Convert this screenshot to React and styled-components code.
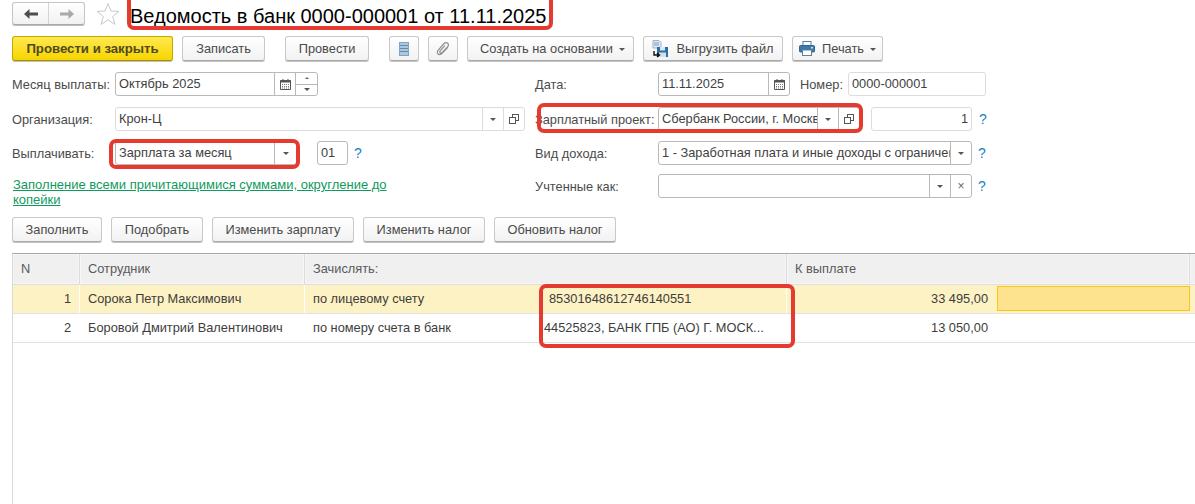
import React from 'react';
import styled, { createGlobalStyle } from 'styled-components';

const GlobalStyle = createGlobalStyle`
  html, body {
    margin: 0;
    padding: 0;
    background: #fff;
  }
  body {
    font-family: "Liberation Sans", Arial, sans-serif;
    font-size: 12.8px;
    color: #4b4b4b;
  }
`;

const Page = styled.div`
  position: relative;
  width: 1195px;
  height: 504px;
  overflow: hidden;
  background: #fff;
`;

const Header = styled.div`
  display: flex;
  align-items: center;
  height: 23px;
  padding: 2px 0 0 12px;
`;

const NavGroup = styled.div`
  display: flex;
  width: 73px;
  height: 23px;
  box-sizing: border-box;
  border: 1px solid #c4c4c4;
  border-bottom-color: #a9a9a9;
  border-radius: 3px;
  background: linear-gradient(#fff, #f1f1f1);
  box-shadow: 0 1px 0 #bbb;
`;

const NavCell = styled.div`
  flex: 1;
  display: flex;
  align-items: center;
  justify-content: center;
  & + & {
    border-left: 1px solid #d4d4d4;
  }
`;

const StarBox = styled.div`
  display: flex;
  margin-left: 11px;
  width: 24px;
  height: 24px;
`;

const Title = styled.h1`
  margin: 4px 0 0 10px;
  font-size: 20px;
  font-weight: 400;
  line-height: 24px;
  color: #000;
  white-space: nowrap;
`;

const Toolbar = styled.div`
  display: flex;
  height: 26px;
  margin-top: 11px;
  padding-left: 12px;
`;

const Button = styled.div`
  display: flex;
  align-items: center;
  justify-content: center;
  flex: none;
  width: ${p => p.$w}px;
  margin-left: ${p => p.$gap || 0}px;
  height: 25px;
  box-sizing: border-box;
  padding-left: ${p => p.$shift || 0}px;
  border: 1px solid #c9c9c9;
  border-bottom-color: #ababab;
  border-radius: 3px;
  background: linear-gradient(#ffffff, #f2f2f2);
  box-shadow: 0 1px 0 #c2c2c2;
  color: #4a4a4a;
  white-space: nowrap;
`;

const PrimaryButton = styled(Button)`
  border-color: #c2a800;
  border-bottom-color: #a89000;
  background: linear-gradient(#ffe94f, #f7d400);
  font-size: 13.2px;
  font-weight: 700;
  color: #4e4a20;
`;

const Caret = styled.span`
  display: inline-block;
  margin-left: 6px;
  margin-top: 1px;
  border: 3px solid transparent;
  border-top: 3px solid #555;
  border-bottom: 0;
`;

const IconSlot = styled.span`
  display: inline-flex;
  margin-right: 7px;
`;

const Form = styled.div`
  display: grid;
  grid-template-columns: 523px 660px;
  margin-top: 10px;
  padding-left: 12px;
`;

const FormColumn = styled.div`
  display: flex;
  flex-direction: column;
`;

const FormRow = styled.div`
  display: flex;
  align-items: center;
  height: 24px;
  margin-bottom: ${p => p.$after ?? 10}px;
`;

const Label = styled.div`
  flex: none;
  width: ${p => p.$w}px;
  margin-left: ${p => p.$gap || 0}px;
  white-space: nowrap;
`;

const Field = styled.div`
  display: flex;
  flex: none;
  align-items: stretch;
  width: ${p => p.$w}px;
  margin-left: ${p => p.$gap || 0}px;
  height: 24px;
  box-sizing: border-box;
  background: #fff;
  border: 1px solid ${p => (p.$soft ? '#dcdcdc' : '#b9b9b9')};
  border-radius: 3px;
`;

const FieldText = styled.div`
  flex: 1;
  min-width: 0;
  overflow: hidden;
  padding: 0 ${p => p.$padRight || 3}px 0 3px;
  line-height: 22px;
  white-space: nowrap;
  text-align: ${p => p.$align || 'left'};
  color: #3f3f3f;
`;

const FieldCell = styled.div`
  display: flex;
  flex: none;
  align-items: center;
  justify-content: center;
  width: ${p => p.$w}px;
  border-left: 1px solid ${p => (p.$soft ? '#dcdcdc' : '#b9b9b9')};
`;

const DownTriangle = styled.span`
  display: block;
  border: 3px solid transparent;
  border-top: 3px solid #555;
  border-bottom: 0;
`;

const UpTriangle = styled.span`
  display: block;
  border: 2px solid transparent;
  border-bottom: 2px solid #666;
  border-top: 0;
`;

const SpinCell = styled(FieldCell)`
  flex-direction: column;
  align-items: stretch;
`;

const SpinPart = styled.div`
  flex: 1;
  display: flex;
  align-items: center;
  justify-content: center;
  & + & {
    border-top: 1px solid #b9b9b9;
  }
`;

const ClearMark = styled.span`
  font-size: 12px;
  line-height: 1;
  color: #666;
`;

const Hint = styled.span`
  flex: none;
  margin-left: ${p => p.$gap || 6}px;
  font-size: 14px;
  color: #1f7fc0;
`;

const FillLink = styled.a`
  display: block;
  width: 385px;
  margin-left: 1px;
  font-size: 13px;
  line-height: 15px;
  color: #0f9a5d;
  text-decoration: underline;
`;

const Actions = styled(Toolbar)`
  margin-top: 10px;
`;

const Table = styled.div`
  margin: 10px 0 0 12px;
  height: 252px;
  border-top: 1px solid #a8a8a8;
  border-left: 1px solid #d9d9d9;
`;

const Columns = '67px 225px 235px 247px 210px 193px 4px';

const HeadRow = styled.div`
  display: grid;
  grid-template-columns: ${Columns};
  height: 31px;
`;

const HeadCell = styled.div`
  grid-column: span ${p => p.$span || 1};
  box-sizing: border-box;
  padding-left: 8px;
  line-height: 29px;
  background: #f0f0f0;
  border-right: 1px solid #dcdcdc;
  border-bottom: 1px solid #dedede;
  box-shadow: inset 0 0 0 1px #f6f6f6;
  color: #5a5a5a;
`;

const Row = styled.div`
  display: grid;
  grid-template-columns: ${Columns};
  height: 29px;
  box-sizing: border-box;
  border-bottom: 1px solid #e2e2e2;
  background: ${p => (p.$active ? '#fdf2c4' : '#fff')};
`;

const Cell = styled.div`
  box-sizing: border-box;
  overflow: hidden;
  padding: 0 ${p => p.$padRight || 8}px 0 ${p => p.$padLeft || 8}px;
  line-height: 27px;
  white-space: nowrap;
  text-align: ${p => p.$align || 'left'};
  border-right: 1px solid ${p => (p.$active ? '#fff' : 'transparent')};
  color: #3d3d3d;
`;

const FocusCell = styled.div`
  box-sizing: border-box;
  height: 25px;
  margin: 1px 0 0;
  background: #fde38d;
  border: 1px solid #f8c51c;
`;

// red annotation frames drawn on top of the form
const Mark = styled.div`
  position: absolute;
  left: ${p => p.$x}px;
  top: ${p => p.$y}px;
  width: ${p => p.$w}px;
  height: ${p => p.$h}px;
  box-sizing: border-box;
  border: 4px solid #e53a2f;
  border-radius: 7px;
  pointer-events: none;
`;

const ArrowIcon = ({ dir, color }) => (
  <svg width="16" height="12" viewBox="0 0 16 12">
    <path
      d={dir === 'left' ? 'M1 6 L6.5 1 V4.4 H15 V7.6 H6.5 V11 Z' : 'M15 6 L9.5 1 V4.4 H1 V7.6 H9.5 V11 Z'}
      fill={color}
    />
  </svg>
);

const StarIcon = () => (
  <svg width="24" height="24" viewBox="0 0 24 24">
    <path
      d="M12 1.5 L14.9 9 L23 9.4 L16.7 14.4 L18.9 22.3 L12 17.9 L5.1 22.3 L7.3 14.4 L1 9.4 L9.1 9 Z"
      fill="#fff"
      stroke="#c9c9c9"
      strokeWidth="1"
    />
  </svg>
);

const ListIcon = () => (
  <svg width="10" height="14" viewBox="0 0 10 14">
    <rect x="0.5" y="0.5" width="9" height="13" fill="#a9c8e0" stroke="#7fa5c2" />
    <path d="M1 3.5 H9 M1 6.5 H9 M1 9.5 H9" stroke="#6a8aa6" strokeWidth="1" />
  </svg>
);

const ClipIcon = () => (
  <svg width="14" height="16" viewBox="0 0 16 18" fill="none">
    <path
      d="M13.5 7 L7 14 C5 16 2.4 15.6 1.8 14 C1.2 12.6 1.6 11.4 2.8 10 L9 3 C10.4 1.5 12.2 1.4 13.4 2.4 C14.6 3.5 14.4 5.2 13.2 6.5 L7.2 13 C6.3 14 5.1 13.9 4.6 13.3 C4.1 12.6 4.3 11.7 5 10.9 L10.2 5.2"
      stroke="#8f8f8f"
      strokeWidth="1.4"
    />
  </svg>
);

const ExportIcon = () => (
  <svg width="17" height="18" viewBox="0 0 17 18">
    <path d="M1 0.5 H7 L9 2.5 V8 H1 Z" fill="#dfe8f2" stroke="#9db3ca" />
    <path d="M2 3 H7 M2 5 H7" stroke="#7fa0c0" />
    <rect x="5" y="7" width="11" height="10" fill="#2c6fa6" />
    <rect x="8" y="7" width="5" height="3.5" fill="#dfe8f2" />
    <rect x="7" y="12.5" width="7" height="4.5" fill="#cfe0ef" />
    <path d="M2 11 V15 H7 M5 13 L7.5 15 L5 17" fill="none" stroke="#111" strokeWidth="1.4" />
  </svg>
);

const PrintIcon = () => (
  <svg width="16" height="15" viewBox="0 0 16 15">
    <rect x="4" y="0.5" width="8" height="5" fill="#fff" stroke="#5f7f9b" />
    <rect x="0.5" y="4.5" width="15" height="6.5" rx="1" fill="#3e7aa9" stroke="#2f668f" />
    <rect x="3.5" y="9" width="9" height="5.5" fill="#fff" stroke="#5f7f9b" />
    <rect x="12" y="6" width="2" height="1.5" fill="#cfe0ef" />
  </svg>
);

const CalendarIcon = () => (
  <svg width="11" height="11" viewBox="0 0 11 11">
    <path d="M0.5 1.5 H10.5 V10.5 H0.5 Z" fill="#fff" stroke="#555" />
    <rect x="0.5" y="1" width="10" height="2.5" fill="#555" />
    <rect x="2.5" y="0" width="1" height="2" fill="#555" />
    <rect x="7.5" y="0" width="1" height="2" fill="#555" />
    <path d="M2 5.5 H9 M2 7.5 H9 M2 9 H9" stroke="#777" strokeDasharray="1 1" />
  </svg>
);

const OpenIcon = () => (
  <svg width="10" height="10" viewBox="0 0 10 10" fill="none">
    <rect x="3.5" y="0.5" width="6" height="6" stroke="#555" />
    <rect x="0.5" y="3.5" width="6" height="6" fill="#fff" stroke="#555" />
  </svg>
);

const rowsData = [
  { n: 1, name: 'Сорока Петр Максимович', how: 'по лицевому счету', acc: '85301648612746140551', accPad: 9, sum: '33 495,00', active: true },
  { n: 2, name: 'Боровой Дмитрий Валентинович', how: 'по номеру счета в банк', acc: '44525823, БАНК ГПБ (АО) Г. МОСК...', accPad: 4, sum: '13 050,00' },
];

export default function App() {
  return (
    <Page>
      <GlobalStyle />
      <Header>
        <NavGroup>
          <NavCell><ArrowIcon dir="left" color="#4d4d4d" /></NavCell>
          <NavCell><ArrowIcon dir="right" color="#a9a9a9" /></NavCell>
        </NavGroup>
        <StarBox><StarIcon /></StarBox>
        <Title>Ведомость в банк 0000-000001 от 11.11.2025</Title>
      </Header>

      <Toolbar>
        <PrimaryButton $w={161}>Провести и закрыть</PrimaryButton>
        <Button $w={83} $gap={9}>Записать</Button>
        <Button $w={84} $gap={20}>Провести</Button>
        <Button $w={30} $gap={20}><ListIcon /></Button>
        <Button $w={30} $gap={9}><ClipIcon /></Button>
        <Button $w={167} $gap={9} $shift={4}>Создать на основании<Caret /></Button>
        <Button $w={140} $gap={9}><IconSlot><ExportIcon /></IconSlot>Выгрузить файл</Button>
        <Button $w={91} $gap={9}><IconSlot><PrintIcon /></IconSlot>Печать<Caret /></Button>
      </Toolbar>

      <Form>
        <FormColumn>
          <FormRow $after={11}>
            <Label $w={103}>Месяц выплаты:</Label>
            <Field $w={203}>
              <FieldText>Октябрь 2025</FieldText>
              <FieldCell $w={20}><CalendarIcon /></FieldCell>
              <SpinCell $w={21}>
                <SpinPart><UpTriangle /></SpinPart>
                <SpinPart><DownTriangle /></SpinPart>
              </SpinCell>
            </Field>
          </FormRow>
          <FormRow>
            <Label $w={103}>Организация:</Label>
            <Field $w={410} $soft>
              <FieldText>Крон-Ц</FieldText>
              <FieldCell $w={20} $soft><DownTriangle /></FieldCell>
              <FieldCell $w={20} $soft><OpenIcon /></FieldCell>
            </Field>
          </FormRow>
          <FormRow $after={12}>
            <Label $w={103}>Выплачивать:</Label>
            <Field $w={182}>
              <FieldText>Зарплата за месяц</FieldText>
              <FieldCell $w={21}><DownTriangle /></FieldCell>
            </Field>
            <Field $w={31} $gap={20}>
              <FieldText>01</FieldText>
            </Field>
            <Hint>?</Hint>
          </FormRow>
          <FillLink>Заполнение всеми причитающимися суммами, округление до копейки</FillLink>
        </FormColumn>

        <FormColumn>
          <FormRow $after={11}>
            <Label $w={123}>Дата:</Label>
            <Field $w={132}>
              <FieldText>11.11.2025</FieldText>
              <FieldCell $w={20}><CalendarIcon /></FieldCell>
            </Field>
            <Label $w={48} $gap={10}>Номер:</Label>
            <Field $w={138} $soft>
              <FieldText>0000-000001</FieldText>
            </Field>
          </FormRow>
          <FormRow>
            <Label $w={123}>Зарплатный проект:</Label>
            <Field $w={202}>
              <FieldText $padRight={1}>Сбербанк России, г. Москва</FieldText>
              <FieldCell $w={20}><DownTriangle /></FieldCell>
              <FieldCell $w={20}><OpenIcon /></FieldCell>
            </Field>
            <Field $w={101} $gap={11} $soft>
              <FieldText $align="right">1</FieldText>
            </Field>
            <Hint $gap={7}>?</Hint>
          </FormRow>
          <FormRow $after={9}>
            <Label $w={123}>Вид дохода:</Label>
            <Field $w={314}>
              <FieldText $padRight={1}>1 - Заработная плата и иные доходы с ограничением</FieldText>
              <FieldCell $w={20}><DownTriangle /></FieldCell>
            </Field>
            <Hint>?</Hint>
          </FormRow>
          <FormRow $after={0}>
            <Label $w={123}>Учтенные как:</Label>
            <Field $w={314}>
              <FieldText />
              <FieldCell $w={20}><DownTriangle /></FieldCell>
              <FieldCell $w={20}><ClearMark>×</ClearMark></FieldCell>
            </Field>
            <Hint>?</Hint>
          </FormRow>
        </FormColumn>
      </Form>

      <Actions>
        <Button $w={90}>Заполнить</Button>
        <Button $w={92} $gap={9}>Подобрать</Button>
        <Button $w={142} $gap={9}>Изменить зарплату</Button>
        <Button $w={122} $gap={9}>Изменить налог</Button>
        <Button $w={122} $gap={9}>Обновить налог</Button>
      </Actions>

      <Table>
        <HeadRow>
          <HeadCell>N</HeadCell>
          <HeadCell>Сотрудник</HeadCell>
          <HeadCell $span={2}>Зачислять:</HeadCell>
          <HeadCell $span={2}>К выплате</HeadCell>
          <HeadCell />
        </HeadRow>
        {rowsData.map(r => (
          <Row key={r.n} $active={r.active}>
            <Cell $align="right" $active={r.active}>{r.n}</Cell>
            <Cell $active={r.active}>{r.name}</Cell>
            <Cell>{r.how}</Cell>
            <Cell $active={r.active} $padLeft={r.accPad}>{r.acc}</Cell>
            <Cell $align="right">{r.sum}</Cell>
            {r.active ? <FocusCell /> : <Cell />}
          </Row>
        ))}
      </Table>

      <Mark $x={127} $y={-6} $w={426} $h={36} />
      <Mark $x={537} $y={103} $w={326} $h={30} />
      <Mark $x={109} $y={139} $w={191} $h={30} />
      <Mark $x={539} $y={284} $w={256} $h={64} />
    </Page>
  );
}
